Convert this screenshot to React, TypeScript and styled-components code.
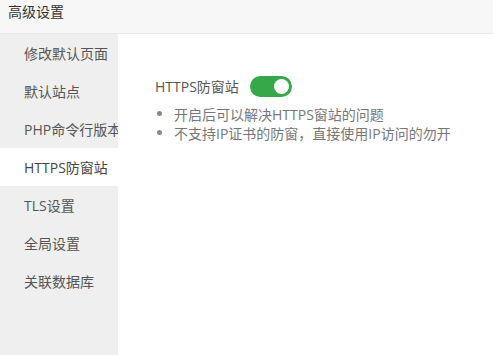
import { createGlobalStyle, styled } from 'styled-components';

const GlobalStyle = createGlobalStyle`
  html, body {
    margin: 0;
    padding: 0;
    background: #fff;
    font-family: "Open Sans", "Noto Sans CJK SC", sans-serif;
  }
`;

const Page = styled.div`
  display: flex;
  flex-direction: column;
  width: 493px;
  height: 355px;
  overflow: hidden;
`;

const Header = styled.div`
  box-sizing: border-box;
  height: 34px;
  padding: 2px 0 0 8px;
  line-height: 20px;
  background: #f7f7f7;
  border-bottom: 1px solid #e9e9e9;
  color: #333;
  font-size: 14px;
`;

const Body = styled.div`
  display: flex;
  flex: 1;
`;

const Sidebar = styled.ul`
  width: 118px;
  margin: 0;
  padding: 0;
  list-style: none;
  background: #efefef;
`;

const NavItem = styled.li<{ $active?: boolean }>`
  display: flex;
  align-items: center;
  height: 38px;
  padding-left: 24px;
  font-size: 14px;
  white-space: nowrap;
  overflow: hidden;
  color: ${(p) => (p.$active ? '#444' : '#555')};
  background: ${(p) => (p.$active ? '#fff' : 'transparent')};
`;

const Content = styled.div`
  flex: 1;
  padding: 41px 0 0 37px;
`;

const FieldRow = styled.div`
  display: flex;
  align-items: center;
  gap: 11px;
  height: 22px;
  color: #555;
  font-size: 14px;
`;

const Toggle = styled.div<{ $on: boolean }>`
  display: flex;
  align-items: center;
  justify-content: ${(p) => (p.$on ? 'flex-end' : 'flex-start')};
  box-sizing: border-box;
  width: 42px;
  height: 21px;
  padding: 3px;
  border-radius: 11px;
  background: ${(p) => (p.$on ? '#36a84a' : '#ccc')};
`;

const Knob = styled.span`
  width: 15px;
  height: 15px;
  border-radius: 50%;
  background: #fff;
`;

const Tips = styled.ul`
  margin: 7px 0 0;
  padding: 0;
  list-style: none;
`;

const Tip = styled.li`
  display: flex;
  align-items: center;
  height: 19px;
  color: #777;
  font-size: 14px;
  white-space: nowrap;

  &::before {
    content: '';
    width: 5px;
    height: 5px;
    margin: 0 12px 0 2px;
    border-radius: 50%;
    background: #888;
  }
`;

const items = ['修改默认页面', '默认站点', 'PHP命令行版本', 'HTTPS防窗站', 'TLS设置', '全局设置', '关联数据库'];

export default function App() {
  return (
    <Page>
      <GlobalStyle />
      <Header>高级设置</Header>
      <Body>
        <Sidebar>
          {items.map((name) => (
            <NavItem key={name} $active={name === 'HTTPS防窗站'}>
              {name}
            </NavItem>
          ))}
        </Sidebar>
        <Content>
          <FieldRow>
            HTTPS防窗站
            <Toggle $on>
              <Knob />
            </Toggle>
          </FieldRow>
          <Tips>
            <Tip>开启后可以解决HTTPS窗站的问题</Tip>
            <Tip>不支持IP证书的防窗，直接使用IP访问的勿开</Tip>
          </Tips>
        </Content>
      </Body>
    </Page>
  );
}
